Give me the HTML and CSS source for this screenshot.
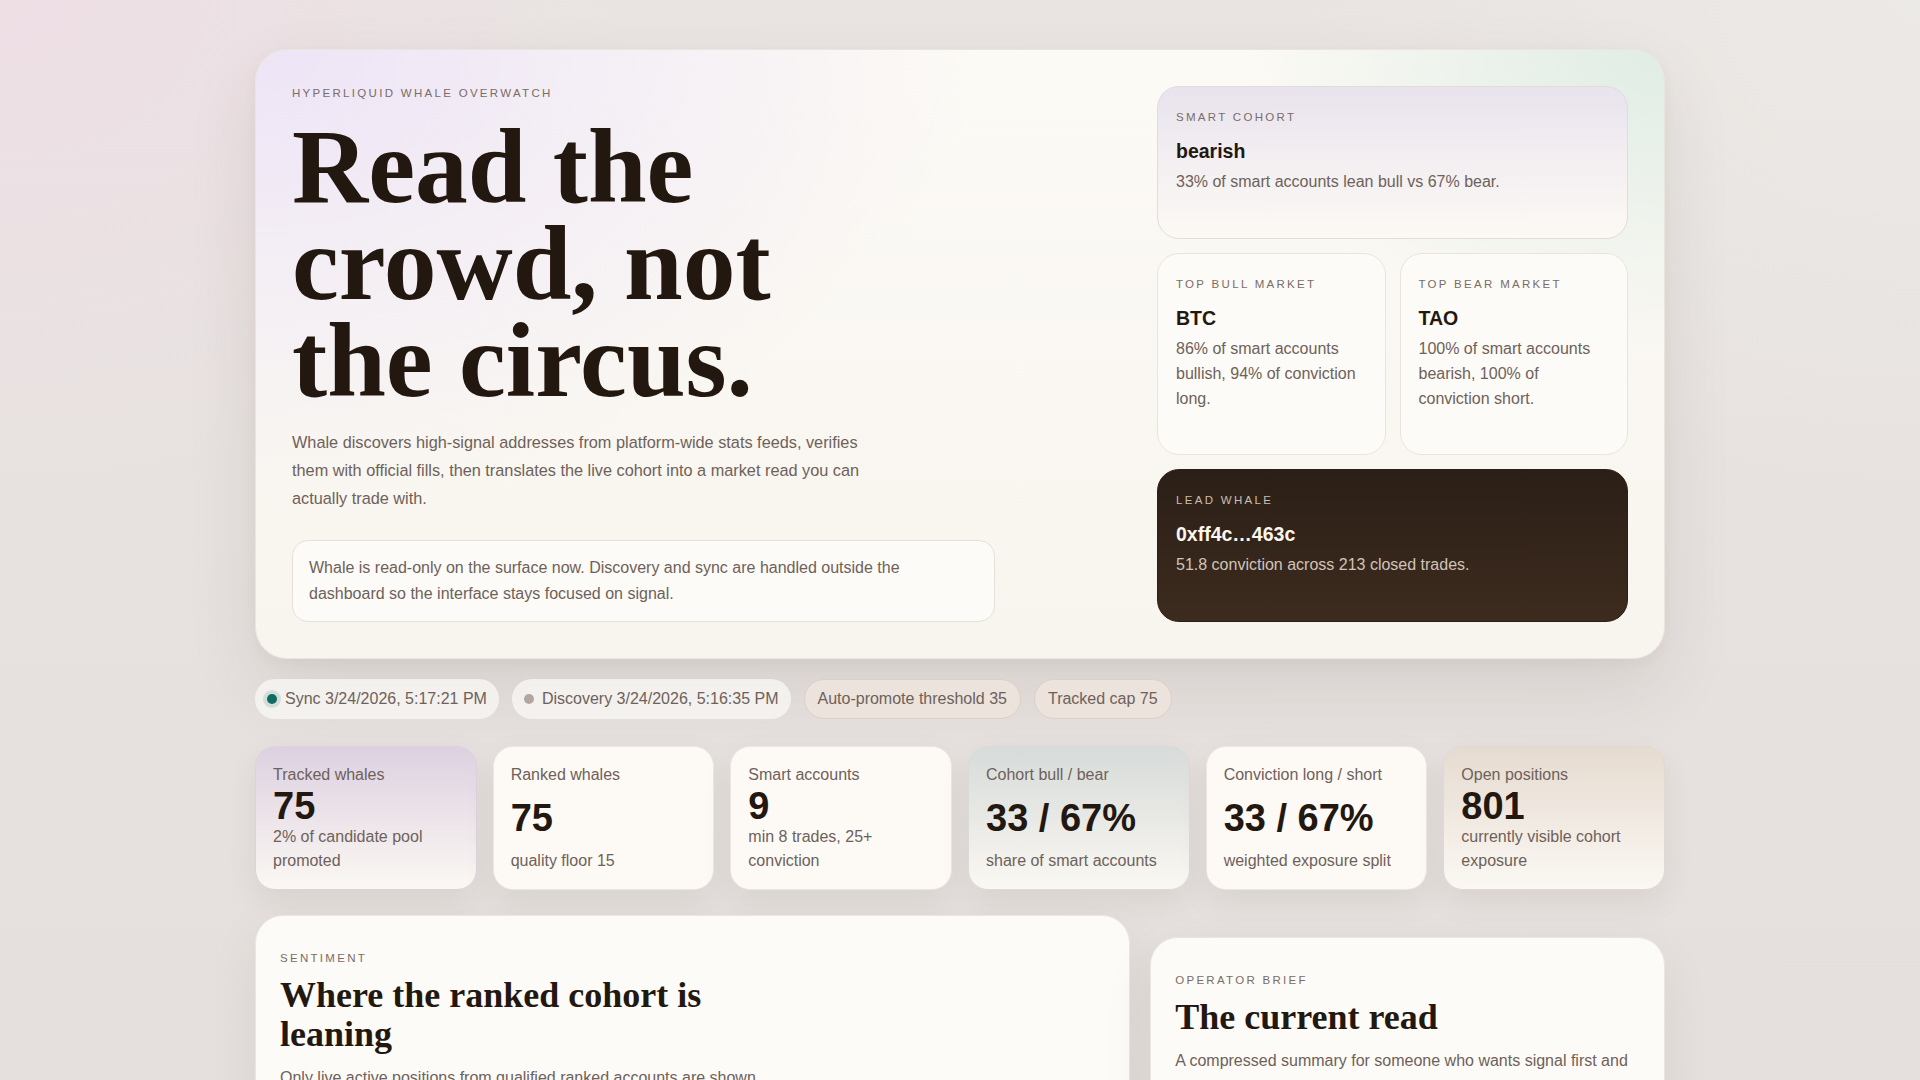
FILE: index.html
```html
<!DOCTYPE html>
<html lang="en">
<head>
<meta charset="utf-8">
<title>Whale — Hyperliquid Whale Overwatch</title>
<link rel="stylesheet" href="styles.css">
</head>
<body>
<main class="page">
  <section class="hero">
    <div class="hero-main">
      <p class="eyebrow">Hyperliquid whale overwatch</p>
      <h1 class="hero-title">Read the<br>crowd, not<br>the circus.</h1>
      <p class="hero-copy">Whale discovers high-signal addresses from platform-wide stats feeds, verifies them with official fills, then translates the live cohort into a market read you can actually trade with.</p>
      <div class="hero-note">Whale is read-only on the surface now. Discovery and sync are handled outside the dashboard so the interface stays focused on signal.</div>
    </div>
    <aside class="hero-side">
      <article class="signal signal--cohort">
        <p class="signal-label">Smart cohort</p>
        <h2 class="signal-title">bearish</h2>
        <p class="signal-text">33% of smart accounts lean bull vs 67% bear.</p>
      </article>
      <div class="signal-pair">
        <article class="signal">
          <p class="signal-label">Top bull market</p>
          <h2 class="signal-title">BTC</h2>
          <p class="signal-text">86% of smart accounts bullish, 94% of conviction long.</p>
        </article>
        <article class="signal">
          <p class="signal-label">Top bear market</p>
          <h2 class="signal-title">TAO</h2>
          <p class="signal-text">100% of smart accounts bearish, 100% of conviction short.</p>
        </article>
      </div>
      <article class="signal signal--dark">
        <p class="signal-label">Lead whale</p>
        <h2 class="signal-title">0xff4c…463c</h2>
        <p class="signal-text">51.8 conviction across 213 closed trades.</p>
      </article>
    </aside>
  </section>

  <div class="status-row">
    <span class="pill"><span class="dot dot--live"></span>Sync 3/24/2026, 5:17:21 PM</span>
    <span class="pill"><span class="dot"></span>Discovery 3/24/2026, 5:16:35 PM</span>
    <span class="pill pill--tag">Auto-promote threshold 35</span>
    <span class="pill pill--tag">Tracked cap 75</span>
  </div>

  <section class="stats">
    <article class="stat stat--lavender">
      <p class="stat-label">Tracked whales</p>
      <p class="stat-value">75</p>
      <p class="stat-sub">2% of candidate pool promoted</p>
    </article>
    <article class="stat">
      <p class="stat-label">Ranked whales</p>
      <p class="stat-value">75</p>
      <p class="stat-sub">quality floor 15</p>
    </article>
    <article class="stat">
      <p class="stat-label">Smart accounts</p>
      <p class="stat-value">9</p>
      <p class="stat-sub">min 8 trades, 25+ conviction</p>
    </article>
    <article class="stat stat--sage">
      <p class="stat-label">Cohort bull / bear</p>
      <p class="stat-value">33 / 67%</p>
      <p class="stat-sub">share of smart accounts</p>
    </article>
    <article class="stat">
      <p class="stat-label">Conviction long / short</p>
      <p class="stat-value">33 / 67%</p>
      <p class="stat-sub">weighted exposure split</p>
    </article>
    <article class="stat stat--sand">
      <p class="stat-label">Open positions</p>
      <p class="stat-value">801</p>
      <p class="stat-sub">currently visible cohort exposure</p>
    </article>
  </section>

  <section class="panels">
    <article class="panel">
      <p class="panel-label">Sentiment</p>
      <h2 class="panel-title panel-title--narrow">Where the ranked cohort is leaning</h2>
      <p class="panel-copy panel-copy--narrow">Only live active positions from qualified ranked accounts are shown here, weighted by notional exposure.</p>
      <div class="bars">
        <div class="bar-row"><span>BTC</span><div class="bar"><span class="bar-fill" style="width:86%"></span></div><span>86%</span></div>
        <div class="bar-row"><span>ETH</span><div class="bar"><span class="bar-fill" style="width:44%"></span></div><span>44%</span></div>
        <div class="bar-row"><span>TAO</span><div class="bar"><span class="bar-fill" style="width:0%"></span></div><span>0%</span></div>
      </div>
    </article>
    <article class="panel panel--brief">
      <p class="panel-label">Operator brief</p>
      <h2 class="panel-title">The current read</h2>
      <p class="panel-copy">A compressed summary for someone who wants signal first and detail second.</p>
    </article>
  </section>
</main>
</body>
</html>
```

FILE: styles.css
```css
* { box-sizing: border-box; }

html, body { margin: 0; padding: 0; }

body {
  font-family: "Liberation Sans", Arial, sans-serif;
  color: #241a13;
  min-height: 100vh;
  background:
    radial-gradient(ellipse 900px 700px at 0% 0%, rgba(238, 222, 229, 0.9), rgba(238, 222, 229, 0) 70%),
    radial-gradient(ellipse 900px 700px at 100% 0%, rgba(236, 234, 230, 0.9), rgba(236, 234, 230, 0) 70%),
    linear-gradient(180deg, #e9e4e2 0%, #e4dfdc 100%);
}

p, h1, h2 { margin: 0; }

.page {
  width: 1410px;
  margin: 0 auto;
  padding: 49px 0 60px;
}

/* HERO */
.hero {
  display: grid;
  grid-template-columns: 1fr 471px;
  padding: 36px;
  border-radius: 32px;
  border: 1px solid #ebe5df;
  background:
    radial-gradient(ellipse 420px 300px at 100% 0%, rgba(216, 233, 224, 0.8), rgba(216, 233, 224, 0) 100%),
    radial-gradient(ellipse 720px 440px at 0% 0%, rgba(237, 228, 246, 1), rgba(237, 228, 246, 0) 100%),
    linear-gradient(180deg, #fcfaf5 0%, #f8f5ef 100%);
  box-shadow: 0 30px 70px rgba(70, 50, 40, 0.10), 0 4px 14px rgba(70, 50, 40, 0.04);
}

.hero-main {
  display: flex;
  flex-direction: column;
  align-items: flex-start;
}

.eyebrow,
.signal-label,
.panel-label {
  font-size: 11.5px;
  letter-spacing: 0.2em;
  text-transform: uppercase;
  color: #7a6c66;
}

.eyebrow { line-height: 15px; }

.hero-title {
  margin-top: 17px;
  font-family: "Liberation Serif", "Times New Roman", serif;
  font-weight: 700;
  font-size: 105.5px;
  line-height: 97px;
  color: #231810;
}

.hero-copy {
  margin-top: 19px;
  max-width: 580px;
  font-size: 16.3px;
  line-height: 28px;
  color: #6e615a;
}

.hero-note {
  margin-top: 28px;
  width: 100%;
  max-width: 703px;
  padding: 14px 16px;
  border: 1px solid #e7e0da;
  border-radius: 16px;
  background: #fdfbf7;
  font-size: 16px;
  line-height: 26px;
  color: #6e615a;
}

.hero-side {
  display: flex;
  flex-direction: column;
  gap: 14px;
}

.signal {
  flex: 1 1 auto;
  padding: 22px 18px;
  border: 1px solid #ebe4de;
  border-radius: 22px;
  background: #fdfbf7;
}

.signal-label { line-height: 16px; }

.signal-title {
  margin-top: 14px;
  font-size: 19.5px;
  line-height: 24px;
  font-weight: 700;
  color: #231810;
}

.signal-text {
  margin-top: 6px;
  font-size: 16px;
  line-height: 25px;
  color: #6e615a;
}

.signal--cohort {
  border-color: #e3dcda;
  background: linear-gradient(180deg, #e8e3ed 0%, #f3eff2 50%, #fcf9f4 100%);
}

.signal-pair {
  flex: 1 1 auto;
  display: grid;
  grid-template-columns: 1fr 1fr;
  gap: 14px;
}

.signal--dark {
  border-color: #2c1f17;
  background: linear-gradient(180deg, #2b1f17 0%, #3d2b1e 100%);
}
.signal--dark .signal-label { color: #cbbdb2; }
.signal--dark .signal-title { color: #fcf6ee; }
.signal--dark .signal-text { color: #d0c4b9; }

/* STATUS PILLS */
.status-row {
  display: flex;
  gap: 13px;
  margin-top: 20px;
}

.pill {
  display: inline-flex;
  align-items: center;
  gap: 8px;
  height: 40px;
  padding: 0 12px;
  border-radius: 999px;
  background: rgba(250, 248, 245, 0.75);
  font-size: 16px;
  color: #6e615a;
}

.pill--tag {
  padding: 0 13px;
  background: #ebe3dc;
  border: 1px solid #dccfc6;
}

.dot {
  width: 10px;
  height: 10px;
  border-radius: 50%;
  background: #b2a79f;
}

.dot--live {
  background: #0e6b61;
  box-shadow: 0 0 0 4px rgba(14, 107, 97, 0.14);
}

/* STATS */
.stats {
  display: grid;
  grid-template-columns: repeat(6, 1fr);
  gap: 16px;
  margin-top: 27px;
}

.stat {
  display: flex;
  flex-direction: column;
  justify-content: space-between;
  padding: 16px 17px;
  border: 1px solid #ece6e0;
  border-radius: 20px;
  background: #fdfaf6;
  box-shadow: 0 12px 30px rgba(70, 50, 40, 0.08);
}

.stat-label,
.stat-sub {
  font-size: 16px;
  line-height: 24px;
  color: #6e615a;
}

.stat-value {
  font-size: 38px;
  line-height: 38px;
  font-weight: 700;
  color: #231810;
}

.stat--lavender { background: linear-gradient(180deg, #ddd1e1 0%, #ece4ea 50%, #fbf8f3 100%); border-color: #dcd2db; }
.stat--sage { background: linear-gradient(180deg, #d7dbd9 0%, #e8e9e5 50%, #fbf8f3 100%); border-color: #d9dbd8; }
.stat--sand { background: linear-gradient(180deg, #e6dbd0 0%, #f0e9e1 50%, #fbf8f3 100%); border-color: #e2d8cf; }

/* PANELS */
.panels {
  display: grid;
  grid-template-columns: 1.7fr 1fr;
  gap: 20px;
  margin-top: 25px;
  align-items: start;
}

.panel {
  padding: 32px 24px 28px;
  border: 1px solid #ece6e0;
  border-radius: 28px;
  background: #fdfbf7;
  box-shadow: 0 20px 50px rgba(70, 50, 40, 0.08);
}

.panel--brief { margin-top: 22px; }

.panel-label { line-height: 20px; }

.panel-title {
  margin-top: 8px;
  font-family: "Liberation Serif", "Times New Roman", serif;
  font-weight: 700;
  font-size: 36px;
  line-height: 39px;
  color: #231810;
}

.panel-title--narrow { max-width: 480px; }

.panel-copy {
  margin-top: 11px;
  font-size: 16px;
  line-height: 26px;
  color: #6e615a;
}

.panel-copy--narrow { max-width: 500px; }

.bars {
  display: flex;
  flex-direction: column;
  gap: 12px;
  margin-top: 24px;
}

.bar-row {
  display: grid;
  grid-template-columns: 60px 1fr 50px;
  align-items: center;
  gap: 12px;
  font-size: 15px;
  color: #6e615a;
}

.bar {
  height: 10px;
  border-radius: 999px;
  background: #efe8e2;
  overflow: hidden;
}

.bar-fill {
  display: block;
  height: 100%;
  background: #0e6b61;
}
```
